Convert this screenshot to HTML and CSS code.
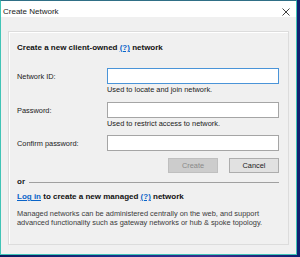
FILE: index.html
```html
<!DOCTYPE html>
<html lang="en">
<head>
    <meta charset="UTF-8">
    <meta name="viewport" content="width=device-width, initial-scale=1.0">
    <link rel="stylesheet" href="styles.css">
    <title>Create Network</title>
</head>
<body>
    <!-- dialog window -->
    <div class="win">
        <div class="ttl">
            <span class="ttl-txt">Create Network</span>
            <svg class="cls" width="8" height="8" viewBox="0 0 8 8">
                <path d="M0.5 0.5 L7.5 7.5 M7.5 0.5 L0.5 7.5" stroke="#2b2b2b" stroke-width="0.9" fill="none"/>
            </svg>
        </div>
        <div class="bdy">
            <div class="grp">
                <p class="hd">Create a new client-owned <a href="#" class="lnk">(?)</a> network</p>

                <!-- form -->
                <form class="frm" onsubmit="return false;">
                    <label for="nid" class="lbl">Network ID:</label>
                    <div class="fld">
                        <input type="text" id="nid" class="inp foc">
                        <span class="hlp">Used to locate and join network.</span>
                    </div>

                    <label for="pw" class="lbl">Password:</label>
                    <div class="fld">
                        <input type="password" id="pw" class="inp">
                        <span class="hlp">Used to restrict access to network.</span>
                    </div>

                    <label for="pw2" class="lbl">Confirm password:</label>
                    <div class="fld">
                        <input type="password" id="pw2" class="inp">
                    </div>
                </form>

                <div class="btns">
                    <button class="btn dis" disabled>Create</button>
                    <button class="btn">Cancel</button>
                </div>

                <div class="or">
                    <span>or</span>
                    <div class="rule"></div>
                </div>

                <p class="hd2"><a href="#" class="lnk">Log in</a> to create a new managed <a href="#" class="lnk">(?)</a> network</p>

                <p class="txt">Managed networks can be administered centrally on the web, and support advanced functionality such as gateway networks or hub &amp; spoke topology.</p>
            </div>
        </div>
    </div>
</body>
</html>
```

FILE: styles.css
```css
*{
    margin: 0;
    padding: 0;
    box-sizing: border-box;
}
body{
    width: 300px;
    height: 257px;
    overflow: hidden;
    background: linear-gradient(90deg, #0d1a5e 0%, #1c2f8a 40%, #3b2a8c 70%, #102070 100%);
    font-family: 'Liberation Sans', Arial, sans-serif;
    color: #1a1a1a;
}
.win{
    width: 297px;
    height: 255px;
    background-color: #f0f0f0;
    border-left: 1px solid #41c4b6;
    border-right: 1px solid #41c4b6;
    border-bottom: 1px solid #41c4b6;
    border-top: 1px solid #2f6f86;
    display: flex;
    flex-direction: column;
}
.ttl{
    height: 16px;
    background-color: #ffffff;
    display: flex;
    align-items: center;
    justify-content: space-between;
    padding: 0 6px 0 2px;
    font-size: 8px;
}
.ttl-txt{
    padding-top: 5px;
}
.cls{
    margin-top: 6px;
}
.bdy{
    flex: 1;
    padding: 14px 7px 9px 7px;
}
.grp{
    height: 100%;
    border: 1px solid #dcdcdc;
    box-shadow: inset 1px 1px 0 #ffffff;
    padding: 11px 8px 0 8px;
    font-size: 7.4px;
}
.hd, .hd2{
    font-weight: bold;
    font-size: 8px;
    line-height: 10px;
    color: #111111;
}
.lnk{
    color: #0a64c8;
    text-decoration: underline;
}
.frm{
    margin-top: 15px;
    display: grid;
    grid-template-columns: 90px 1fr;
    row-gap: 7.5px;
}
.lbl{
    padding-top: 4px;
    line-height: 9px;
}
.fld{
    display: flex;
    flex-direction: column;
}
.inp{
    height: 16px;
    width: 172px;
    border: 1px solid #a5a5a5;
    background-color: #ffffff;
    outline: none;
}
.foc{
    border-color: #4a94d8;
}
.hlp{
    margin-top: 1px;
    line-height: 9px;
}
.btns{
    margin-top: 7px;
    display: flex;
    justify-content: flex-end;
    gap: 11px;
    padding-right: 1px;
}
.btn{
    width: 50px;
    height: 15px;
    font-family: 'Liberation Sans', Arial, sans-serif;
    font-size: 7.4px;
    background-color: #e1e1e1;
    border: 1px solid #adadad;
    color: #1a1a1a;
}
.dis{
    background-color: #cccccc;
    border-color: #bfbfbf;
    color: #8a8a8a;
}
.or{
    margin-top: 4px;
    display: flex;
    align-items: center;
    gap: 4px;
    font-weight: bold;
    font-size: 8px;
    line-height: 10px;
}
.rule{
    flex: 1;
    height: 1px;
    background-color: #a0a0a0;
    margin-right: 1px;
}
.hd2{
    margin-top: 5px;
}
.txt{
    margin-top: 8px;
    line-height: 8.6px;
    color: #3a3a3a;
}
```
